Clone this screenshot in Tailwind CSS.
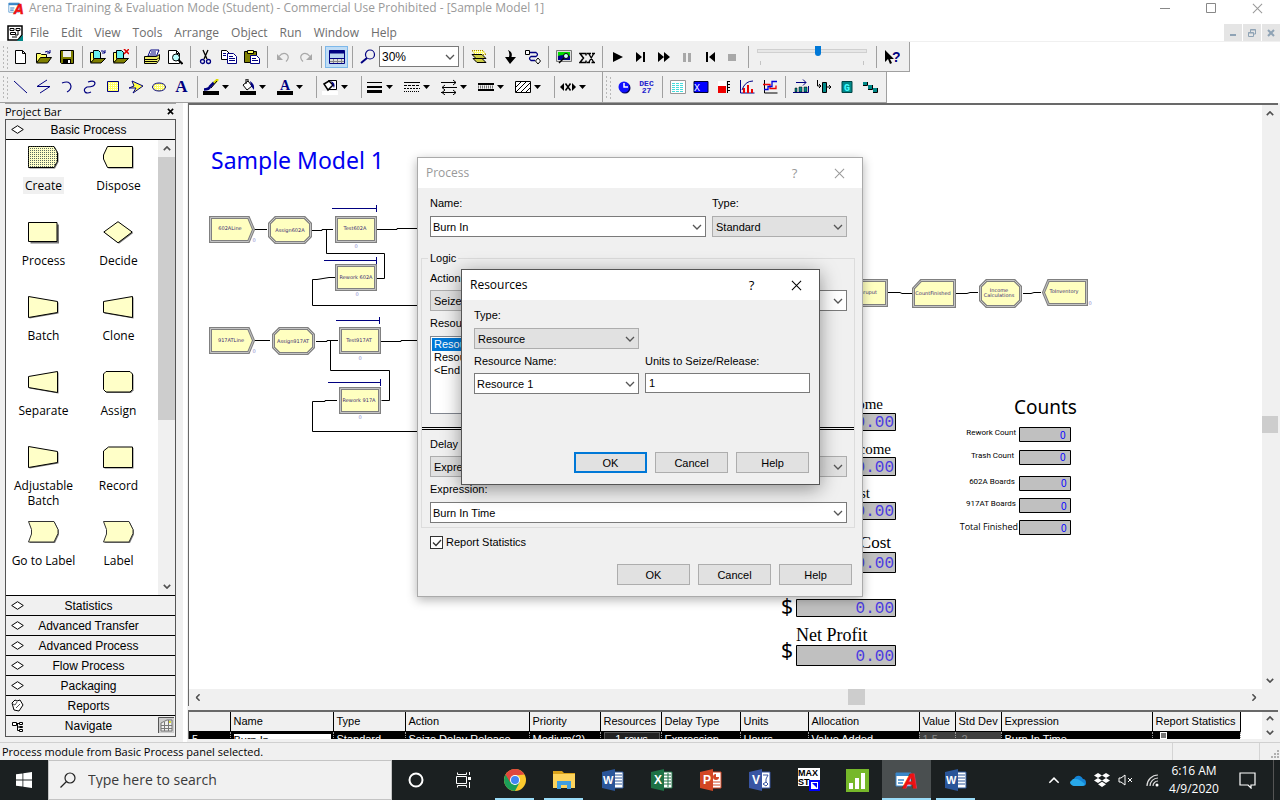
<!DOCTYPE html>
<html lang="en">
<head>
    <meta charset="UTF-8">
    <meta name="viewport" content="width=device-width, initial-scale=1.0">
    <title>Arena Training & Evaluation Mode (Student) - [Sample Model 1]</title>
    <script src="https://cdn.jsdelivr.net/npm/@tailwindcss/browser@4"></script>
</head>
<body class="h-screen overflow-hidden flex flex-col bg-white text-black font-['Open_Sans',sans-serif] text-[12px] leading-4">

    <!-- shared shapes -->
    <svg class="absolute size-0">
        <symbol id="chev" viewBox="0 0 10 6"><path d="M1 1l4 4 4-4" fill="none" stroke="currentColor" stroke-width="1.3"/></symbol>
        <symbol id="arr" viewBox="0 0 10 6"><path d="M1 1l4 4 4-4" fill="none" stroke="#505050" stroke-width="2"/></symbol>
        <symbol id="caret" viewBox="0 0 7 4"><path d="M0 0h7L3.500 4z"/></symbol>
        <symbol id="dia" viewBox="0 0 13 9"><path d="M.7 4.500L6.500 .7l5.800 3.800-5.800 3.800z" fill="#fff" stroke="#000"/></symbol>
        <symbol id="x" viewBox="0 0 12 12"><path d="M1 1l10 10M11 1L1 11" fill="none" stroke="currentColor" stroke-width="1.1"/></symbol>
        <symbol id="arena" viewBox="0 0 24 20">
            <path d="M1 3h15v13H1z" fill="#fff" stroke="#3a86c8"/><path d="M1 3h15v3H1z" fill="#3a86c8"/>
            <path d="M3 10h6M3 13h5" stroke="#3a86c8" stroke-width="1.500"/>
            <text x="8" y="18" font-family="Liberation Sans" font-size="20" font-weight="bold" font-style="italic" fill="#e11" stroke="#e11" stroke-width=".8">A</text>
        </symbol>
        <symbol id="word" viewBox="0 0 22 22">
            <path d="M11 3h10v16H11z" fill="#fff" stroke="#2a5599"/><path d="M13 6h7M13 9h7M13 12h7M13 15h7" stroke="#2a5599"/>
            <path d="M0 3L13 0v22L0 19z" fill="#2a5599"/>
            <text x="1" y="15" font-family="Liberation Sans" font-size="11" font-weight="bold" fill="#fff">W</text>
        </symbol>
        <symbol id="s-create" viewBox="0 0 31 23"><path d="M.5 .5H26l3.500 6v8.500l-3.500 6.500H.5z"/></symbol>
        <symbol id="s-dispose" viewBox="0 0 31 23"><path d="M4.500 .5h25v21h-25L.5 13V9z"/></symbol>
        <symbol id="s-process" viewBox="0 0 31 23"><path d="M.5 1.500h28.500v19H.5z"/></symbol>
        <symbol id="s-decide" viewBox="0 0 31 23"><path d="M15 .7l14.200 10.300L15 21.800 .8 11z"/></symbol>
        <symbol id="s-batch" viewBox="0 0 31 23"><path d="M.5 .5l29 5v11l-29 5z"/></symbol>
        <symbol id="s-clone" viewBox="0 0 31 23"><path d="M29.500 .5L.5 5.500v11l29 5z"/></symbol>
        <symbol id="s-assign" viewBox="0 0 31 23"><path d="M3 .5h24l2.500 2.500v15.500l-2.500 2.500H3L.5 18.500V3z"/></symbol>
        <symbol id="s-record" viewBox="0 0 31 23"><path d="M5.500 1h24v20.500H.5V5z"/></symbol>
        <symbol id="s-label" viewBox="0 0 31 23"><path d="M.5 .5H26l4 8v4l-4 8.500H.5l3-8V8.500z"/></symbol>
        <pattern id="dots" width="2" height="2" patternUnits="userSpaceOnUse"><path d="M0 0h1v1H0z" fill="#5a6a60"/></pattern>
        <pattern id="yel" width="2" height="2" patternUnits="userSpaceOnUse"><path d="M0 0h2v2H0z" fill="#ff6"/><path d="M0 0h1v1H0z" fill="#fff"/></pattern>
    </svg>

    <!-- title bar -->
    <header class="h-4 shrink-0 flex items-center pl-2 text-[#999]">
        <svg class="w-[17px] h-[14px] mr-1"><use href="#arena"/></svg>
        <h1 class="grow">Arena Training &amp; Evaluation Mode (Student) - Commercial Use Prohibited - [Sample Model 1]</h1>
        <button class="w-[46px] flex justify-center" aria-label="Minimize"><svg class="w-[10px] h-[10px]"><path d="M0 5.500h10" stroke="#888"/></svg></button>
        <button class="w-[46px] flex justify-center" aria-label="Maximize"><svg class="w-[10px] h-[10px]"><path d="M.5 .5h9v9h-9z" fill="none" stroke="#888"/></svg></button>
        <button class="w-[46px] flex justify-center" aria-label="Close"><svg class="w-[11px] h-[11px]"><use href="#x"/></svg></button>
    </header>

    <!-- menu -->
    <nav class="h-[26px] shrink-0 flex items-center pt-2 pl-[7px] text-[#6d6d6d] border-b border-[#f0f0f0]">
        <svg class="w-4 h-4 mr-[7px]" viewBox="0 0 16 16"><path d="M1 1h14v9l-4 5H1z" fill="#fff" stroke="#000" stroke-width="1.500"/><path d="M3 3.500h4v2H3zM9 3.500h4v2H9zM3.500 7.500h5v2h-5z" fill="none" stroke="#000"/><path d="M5 12h5M11 6v4H8" fill="none" stroke="#000"/><path d="M10 16l6-6v6z" fill="#088"/></svg>
        <div class="grow flex gap-3">
            <a href="#">File</a><a href="#">Edit</a><a href="#">View</a><a href="#">Tools</a><a href="#">Arrange</a><a href="#">Object</a><a href="#">Run</a><a href="#">Window</a><a href="#">Help</a>
        </div>
        <div class="flex gap-px">
            <button class="w-[18px] h-[17px] bg-[#e5e5e5] flex justify-center items-center" aria-label="Minimize document"><svg class="w-2 h-2"><path d="M1 6h6" stroke="#8fa3b5" stroke-width="2"/></svg></button>
            <button class="w-[18px] h-[17px] bg-[#e5e5e5] flex justify-center items-center" aria-label="Restore document"><svg class="w-2 h-2" viewBox="0 0 8 8"><path d="M.5 3.500h5v4h-5zM2.500 3V.5h5v4.500H6M.5 4h5M2.500 1h5" fill="none" stroke="#8fa3b5"/></svg></button>
            <button class="w-[18px] h-[17px] bg-[#e5e5e5] flex justify-center items-center" aria-label="Close document"><svg class="w-2 h-2" viewBox="0 0 8 8"><path d="M1 1l6 6M7 1L1 7" stroke="#8fa3b5" stroke-width="2"/></svg></button>
        </div>
    </nav>

    <!-- standard toolbar -->
    <div class="h-[30px] shrink-0 flex">
        <div class="flex items-center bg-[#f0f0f0] border-b border-r border-[#a0a0a0] pr-[6px] [&_button]:w-[23px] [&_button]:h-[22px] [&_button]:flex [&_button]:items-center [&_button]:justify-center [&_button>svg]:size-4 [&>i]:w-2 [&>i]:h-[22px] [&>i]:flex [&>i]:justify-center [&>i]:before:w-px [&>i]:before:bg-[#a0a0a0]">
            <svg class="w-[9px] h-[26px]"><path d="M3.500 2v22M7.500 3v22" stroke="#b8b8b8" stroke-dasharray="2 2"/></svg>
            <button aria-label="New"><svg viewBox="0 0 16 16"><path d="M2.500 1.500h7l3 3v10h-10zM9.500 1.500v3h3" fill="#fff" stroke="#000"/></svg></button>
            <button aria-label="Open"><svg viewBox="0 0 16 16"><path d="M.5 13.500v-9h4l1 1h5v3" fill="#ff6" stroke="#000"/><path d="M.5 14l4-5.500h11l-4 5.500z" fill="#808000" stroke="#000"/><path d="M9 3q3-2 5 1m0-3v3h-3" fill="none" stroke="#000080"/></svg></button>
            <button aria-label="Save"><svg viewBox="0 0 16 16"><path d="M1.500 1.500h13v13h-12l-1-1z" fill="#808000" stroke="#000"/><path d="M4 2h8v6H4z" fill="#f0f0f0"/><path d="M4 10h8v5H4z"/><path d="M9 11h2v3H9z" fill="#fff"/></svg></button>
            <i></i>
            <button aria-label="Attach panel"><svg viewBox="0 0 16 16"><path d="M.5 13V3.500h3l1 1h3v8z" fill="#ff6" stroke="#000"/><path d="M3.500 1.500h5l2 2v6h-7z" fill="#6ee" stroke="#000"/><path d="M.5 14l4-4.500h11L11 14z" fill="#808000" stroke="#000"/><path d="M11 2q3-1 4 2m0-3v3h-3" fill="none" stroke="#000080"/></svg></button>
            <button aria-label="Detach panel"><svg viewBox="0 0 16 16"><path d="M.5 13V3.500h3l1 1h3v8z" fill="#ff6" stroke="#000"/><path d="M3.500 1.500h5l2 2v6h-7z" fill="#6ee" stroke="#000"/><path d="M.5 14l4-4.500h11L11 14z" fill="#808000" stroke="#000"/><path d="M11 0l5 5M16 0l-5 5" stroke="#d00" stroke-width="1.500"/></svg></button>
            <i></i>
            <button aria-label="Print"><svg viewBox="0 0 16 16"><path d="M4 7l2.500-6H15l-2.500 6z" fill="#fff" stroke="#000080"/><path d="M7 3h5M6 5h6" stroke="#000080"/><path d="M.5 7.500h12l3-2v5l-3 4H.5z" fill="#ee6" stroke="#000"/><path d="M1 10.500h12l2-2M1 12.500h12" fill="none" stroke="#000"/></svg></button>
            <button aria-label="Print Preview"><svg viewBox="0 0 16 16"><path d="M1.500 1.500h8l3 3v10h-11zM9.500 1.500v3h3" fill="#fff" stroke="#000"/><circle cx="9" cy="8.500" r="3.500" fill="#bff" stroke="#000"/><path d="M11.500 11l4 4" stroke="#000" stroke-width="2"/></svg></button>
            <i></i>
            <button aria-label="Cut"><svg viewBox="0 0 16 16"><path d="M5 1l4 9M10 1L6 10" stroke="#000" stroke-width="1.300"/><circle cx="4.500" cy="12.500" r="2" fill="none" stroke="#000080" stroke-width="1.300"/><circle cx="10.500" cy="12.500" r="2" fill="none" stroke="#000080" stroke-width="1.300"/></svg></button>
            <button aria-label="Copy"><svg viewBox="0 0 16 16"><path d="M.5 1.500h5l3 3v6h-8z" fill="#fff" stroke="#000"/><path d="M6.500 4.500h6l3 3v7h-9z" fill="#fff" stroke="#000080"/><path d="M2 4.500h3M2 6.500h3M8 7.500h4M8 9.500h6M8 11.500h6" stroke="#000080"/></svg></button>
            <button aria-label="Paste"><svg viewBox="0 0 16 16"><path d="M.5 2.500h12v11H.5z" fill="#808000" stroke="#000"/><path d="M3.500 1.500h6v3h-6z" fill="#ff6" stroke="#000"/><path d="M6.500 6.500h6l3 3v5h-9z" fill="#fff" stroke="#000080"/><path d="M8 9.500h4M8 11.500h6" stroke="#000080"/></svg></button>
            <i></i>
            <button aria-label="Undo"><svg viewBox="0 0 16 16"><path d="M4 7.500q4-5 8-2 3 3-1 7" fill="none" stroke="#a8a8a8" stroke-width="1.200"/><path d="M2 5v6h6z" fill="#a8a8a8"/></svg></button>
            <button aria-label="Redo"><svg viewBox="0 0 16 16"><path d="M12 7.500Q8 2.500 4 5.500q-3 3 1 7" fill="none" stroke="#a8a8a8" stroke-width="1.200"/><path d="M14 5v6H8z" fill="#a8a8a8"/></svg></button>
            <i></i>
            <button class="bg-[#bfdcf5] border border-[#7db8ea]" aria-label="Split Screen"><svg viewBox="0 0 16 16"><path d="M.5 1.500h15v13H.5z" fill="#b9d3f0" stroke="#000080"/><path d="M.5 1.500h15v3H.5z" fill="#000080"/><path d="M1 10h14v4H1z" fill="#ddd"/><path d="M1 12.500h14M4.500 10v4M8.500 10v4M12.500 10v4" stroke="#888"/><path d="M1 9.500h14" stroke="#000080"/></svg></button>
            <i></i>
            <button aria-label="Zoom"><svg viewBox="0 0 16 16"><circle cx="10" cy="5.500" r="4.500" fill="none" stroke="#000080" stroke-width="1.200"/><path d="M7 9l-6 5" stroke="#000080" stroke-width="2"/></svg></button>
            <div class="w-20 relative">
                <select aria-label="Zoom level" class="appearance-none block w-full h-[21px] bg-white border border-[#7a7a7a] pl-[2px] text-[12px] font-['Liberation_Sans',sans-serif]"><option>30%</option></select>
                <svg class="absolute right-1 top-2 w-[10px] h-[6px] pointer-events-none text-[#555]"><use href="#chev"/></svg>
            </div>
            <i></i>
            <button aria-label="Layers"><svg viewBox="0 0 16 16"><path d="M1 1.500h11l3 4H4z" fill="url(#yel)" stroke="#a80" stroke-dasharray="1 1"/><path d="M1 5.500h10l4 4H5z" fill="#cc4" stroke="#000"/><path d="M2 9.500h9l4 4H6z" fill="#cc4" stroke="#000"/></svg></button>
            <i></i>
            <button aria-label="Submodel"><svg viewBox="0 0 16 16"><path d="M6 1q5 2 3.500 7H14l-6 7-5-7h4Q8 4 6 1z"/></svg></button>
            <button aria-label="Connect"><svg viewBox="0 0 16 16"><path d="M.5 1.500h4v4h-4z" fill="#fff" stroke="#000"/><path d="M5 3.500h6q3 2 0 4H6q-3 2 0 4h4" fill="none" stroke="#000080" stroke-width="1.300"/><path d="M13 9l2.500 3-2.500 3-2.500-3z" fill="#fff" stroke="#000"/></svg></button>
            <i></i>
            <button aria-label="View Manager"><svg viewBox="0 0 16 16"><path d="M.5 1.500h15v11H.5z" fill="#ddd" stroke="#777"/><path d="M2 3h12v4H2z" fill="#0d0"/><path d="M2 7q6-2 12 0v4H2z" fill="#008"/><circle cx="10" cy="7" r="2.500" fill="#cff" stroke="#000"/><path d="M8 9l-5 5" stroke="#000" stroke-width="1.500"/></svg></button>
            <button aria-label="Expression Builder"><svg viewBox="0 0 16 16"><path d="M7 6.500V4.500H1L4.500 9 1 13.500h6v-2" fill="none" stroke="#000" stroke-width="1.500"/><path d="M10 5l4.500 8M14.500 5L10 13M8 4.500h4M13 4.500h3M8 13.500h3M12.500 13.500H16" stroke="#000" fill="none" stroke-width="1.300"/></svg></button>
            <i></i>
            <button aria-label="Go"><svg viewBox="0 0 16 16"><path d="M3 3l10 5-10 5z"/></svg></button>
            <button aria-label="Step"><svg viewBox="0 0 16 16"><path d="M3 3l6 5-6 5zM10 3h2v10h-2z"/></svg></button>
            <button aria-label="Fast-Forward"><svg viewBox="0 0 16 16"><path d="M2 3l6 5-6 5zM8 3l6 5-6 5z"/></svg></button>
            <button aria-label="Pause"><svg viewBox="0 0 16 16"><path d="M4 4h3v9H4zM9 4h3v9H9z" fill="#a8a8a8"/></svg></button>
            <button aria-label="Start Over"><svg viewBox="0 0 16 16"><path d="M13 3L7 8l6 5zM4 3h2v10H4z"/></svg></button>
            <button aria-label="End"><svg viewBox="0 0 16 16"><path d="M3 5h8v7H3z" fill="#a8a8a8"/></svg></button>
            <i></i>
            <div class="w-[120px] relative px-[5px]">
                <input type="range" value="56" aria-label="Animation speed" class="appearance-none block w-full h-1 mb-2 bg-[#e7e7e7] border border-[#d0d0d0] [&::-webkit-slider-thumb]:appearance-none [&::-webkit-slider-thumb]:w-[6px] [&::-webkit-slider-thumb]:h-[10px] [&::-webkit-slider-thumb]:bg-[#0078d7] [&::-webkit-slider-thumb]:rounded-b-sm">
                <div class="mx-[3px] h-1 border-x border-[#c4c4c4]"></div>
            </div>
            <i></i>
            <button aria-label="Context Help"><svg viewBox="0 0 16 16"><path d="M1 1v12l3-3 2 5 2-1-2-4h4z"/><text x="8" y="13" font-family="Liberation Sans" font-size="14" font-weight="bold" fill="#000080">?</text></svg></button>
        </div>
    </div>

    <!-- draw, animate and integration toolbars -->
    <div class="h-[31px] shrink-0 flex [&>div]:flex [&>div]:items-center [&>div]:bg-[#f0f0f0] [&>div]:border-b [&>div]:border-r [&>div]:border-[#a0a0a0] [&_button]:w-[23px] [&_button]:h-[22px] [&_button]:flex [&_button]:items-center [&_button]:justify-center [&_button>svg]:size-4 [&_i]:w-2 [&_i]:h-[22px] [&_i]:flex [&_i]:justify-center [&_i]:before:w-px [&_i]:before:bg-[#a0a0a0] [&_button.drop]:w-[37px] [&_button.drop]:justify-start [&_button.drop]:pl-[2px] [&_button.drop]:gap-[3px] [&_button.drop>svg+svg]:w-[7px] [&_button.drop>svg+svg]:h-1">
        <div class="pr-[7px]">
            <svg class="w-[9px] h-[26px]"><path d="M3.500 2v22M7.500 3v22" stroke="#b8b8b8" stroke-dasharray="2 2"/></svg>
            <button aria-label="Line"><svg viewBox="0 0 16 16"><path d="M1 2l13 12" stroke="#000080"/></svg></button>
            <button aria-label="Polyline"><svg viewBox="0 0 16 16"><path d="M11 1L1 7.500h13L4 14" fill="none" stroke="#000080"/></svg></button>
            <button aria-label="Arc"><svg viewBox="0 0 16 16"><path d="M3 4q8-3 9 3 0 4-4 6" fill="none" stroke="#000080" stroke-width="1.200"/></svg></button>
            <button aria-label="Bezier Curve"><svg viewBox="0 0 16 16"><path d="M6 3q6-2 7 1 0 4-8 4-4 2-2 5 2 2 6 0" fill="none" stroke="#000080" stroke-width="1.200"/></svg></button>
            <button aria-label="Box"><svg viewBox="0 0 16 16"><path d="M2.500 2.500h11v10h-11z" fill="url(#yel)" stroke="#000080"/></svg></button>
            <button aria-label="Polygon"><svg viewBox="0 0 16 16"><path d="M4 2l11 5-10 7 3-5H1l5-2z" fill="#ff4" stroke="#000080"/></svg></button>
            <button aria-label="Ellipse"><svg viewBox="0 0 16 16"><ellipse cx="8" cy="8" rx="6.500" ry="4" fill="url(#yel)" stroke="#000080"/></svg></button>
            <button aria-label="Text" class="font-['Liberation_Serif',serif] font-bold text-[17px] text-[#000080]">A</button>
            <i></i>
            <button class="drop" aria-label="Line Color"><svg viewBox="0 0 16 16"><path d="M0 12h16v4H0z"/><path d="M1 10.500q5 0 6-3l4-4" fill="none" stroke="#000080" stroke-width="2.500"/><path d="M11 4l4-4" stroke="#dd0" stroke-width="2.500"/><path d="M8 9l6-7" stroke="#000"/></svg><svg><use href="#caret"/></svg></button>
            <button class="drop" aria-label="Fill Color"><svg viewBox="0 0 16 16"><path d="M0 12h16v4H0z"/><path d="M3 6l5-4 4 5-5 4z" fill="#fff" stroke="#000"/><path d="M10 2q5 3 4 9l-3-4z" fill="#000080"/><path d="M6 5V0h2v3" fill="none" stroke="#000"/></svg><svg><use href="#caret"/></svg></button>
            <button class="drop" aria-label="Text Color"><svg viewBox="0 0 16 16"><path d="M0 12h16v4H0z"/><text x="3" y="11" font-family="Liberation Serif" font-size="14" font-weight="bold" fill="#000080">A</text></svg><svg><use href="#caret"/></svg></button>
            <i></i>
            <button class="drop" aria-label="Window Background Color"><svg viewBox="0 0 16 16"><path d="M0 12h16v4H0z" fill="#fff"/><path d="M6.500 1.500h8v9h-8z" fill="#fff" stroke="#000"/><path d="M2 5l5-3 4 4-5 5z" fill="#fff" stroke="#000" stroke-width="1.500"/><path d="M9 2q5 2 3 7z" fill="#000080"/></svg><svg><use href="#caret"/></svg></button>
            <i></i>
            <button class="drop" aria-label="Line Width"><svg viewBox="0 0 16 16"><path d="M0 3.500h15" stroke="#000"/><path d="M0 8h15" stroke="#000" stroke-width="2"/><path d="M0 12.500h15" stroke="#000" stroke-width="3"/></svg><svg><use href="#caret"/></svg></button>
            <button class="drop" aria-label="Line Style"><svg viewBox="0 0 16 16"><path d="M0 3.500h16" stroke="#000"/><path d="M0 6.500h16" stroke="#000" stroke-dasharray="3 1"/><path d="M0 9.500h16" stroke="#000" stroke-dasharray="2 1"/><path d="M0 12.500h16" stroke="#000" stroke-dasharray="1 1"/></svg><svg><use href="#caret"/></svg></button>
            <button class="drop" aria-label="Arrow Style"><svg viewBox="0 0 16 16"><path d="M0 3.500h15M12 1l3 2.500L12 6M1 8.500h15M4 6L1 8.500 4 11M0 13.500h15M4 11l-3 2.500L4 16M12 11l3 2.500-3 2.500" fill="none" stroke="#000"/></svg><svg><use href="#caret"/></svg></button>
            <button class="drop" aria-label="Line Pattern"><svg viewBox="0 0 16 16"><path d="M0 5h16M0 11h16" stroke="#000" stroke-width="2"/><path d="M0 8h16" stroke="#777" stroke-width="3" stroke-dasharray="1 1"/></svg><svg><use href="#caret"/></svg></button>
            <button class="drop" aria-label="Fill Pattern"><svg viewBox="0 0 16 16"><path d="M.5 2.500h15v11H.5z" fill="#fff" stroke="#000"/><path d="M1 8l5-5M1 13L11 3M6 13l9-9M11 13l4-4" stroke="#000"/></svg><svg><use href="#caret"/></svg></button>
            <i></i>
            <button class="drop" aria-label="Text Effect"><svg viewBox="0 0 16 16"><path d="M4 4v8L0 8zM12 4v8l4-4z"/><path d="M5.500 4.500l5 7M10.500 4.500l-5 7" stroke="#000" stroke-width="1.500"/></svg><svg><use href="#caret"/></svg></button>
        </div>
        <div class="pr-[5px]">
            <svg class="w-[9px] h-[26px]"><path d="M3.500 2v22M7.500 3v22" stroke="#b8b8b8" stroke-dasharray="2 2"/></svg>
            <button aria-label="Clock"><svg viewBox="0 0 16 16"><circle cx="9" cy="9" r="5.500" fill="#000050"/><circle cx="8" cy="8" r="5.500" fill="#11f"/><path d="M8 4v4h4" fill="none" stroke="#fff" stroke-width="1.500"/></svg></button>
            <button aria-label="Date" class="flex-col font-['Liberation_Mono',monospace] font-bold text-[8px] leading-[7px] text-[#22c]"><span>DEC</span><span>27</span></button>
            <i></i>
            <button aria-label="Variable"><svg viewBox="0 0 16 16"><path d="M.5 1.500h15v13H.5z" fill="#fff" stroke="#999"/><path d="M2 4.500h12M2 6.500h12M2 8.500h12M2 10.500h12M2 12.500h12" stroke="#4dd" stroke-dasharray="3 1"/></svg></button>
            <button aria-label="Level"><svg viewBox="0 0 16 16"><path d="M1 2.500h14v11H1z" fill="#00f" stroke="#003"/><text x="1" y="12" font-family="Liberation Mono" font-size="10" fill="#fff">X</text></svg></button>
            <button aria-label="Histogram"><svg viewBox="0 0 16 16"><path d="M2 2h8v5H2z" fill="#fff"/><path d="M2 7h8v7H2z" fill="#e00"/><path d="M11.500 2v12M12 2.500h2M12 5.500h2M12 8.500h2M12 11.500h2" stroke="#000"/></svg></button>
            <button aria-label="Plot"><svg viewBox="0 0 16 16"><path d="M1.500 1v13h14M3 11Q6 2 14 2" fill="none" stroke="#008"/><path d="M4 9h2v5H4zM8 6h2v8H8zM12 10h2v4h-2z" fill="#e00"/></svg></button>
            <button aria-label="Level Plot"><svg viewBox="0 0 16 16"><path d="M2.500 1v13h13" fill="none" stroke="#000"/><path d="M1 5.500h7v4h6v-3" fill="none" stroke="#e00" stroke-width="1.300"/><path d="M2 10.500h4v-3h4v-5h5" fill="none" stroke="#00d" stroke-width="1.300"/></svg></button>
            <i></i>
            <button aria-label="Storage"><svg viewBox="0 0 16 16"><path d="M3 3.500h10M10 .5l3 3-3 3" fill="none" stroke="#000080"/><path d="M0 13.500h15.500V7" fill="none" stroke="#000080"/><path d="M2 9h2v4H2zM6 8h3v5H6zM11 8h3v5h-3z" fill="#088" stroke="#000" stroke-width=".5"/></svg></button>
            <button aria-label="Seize"><svg viewBox="0 0 16 16"><path d="M1.500 1v6H5M3 5l2 2-2 2M11 8h4M13 6l2 2-2 2" fill="none" stroke="#000"/><path d="M6.500 3.500h4v10h-4z" fill="#088" stroke="#000"/></svg></button>
            <button aria-label="Global"><svg viewBox="0 0 16 16"><path d="M3 2.500h10v11H3z" fill="#088" stroke="#044"/><text x="5" y="12" font-family="Liberation Mono" font-size="10" font-weight="bold" fill="#4ff">G</text></svg></button>
            <button aria-label="Network"><svg viewBox="0 0 16 16"><path d="M1 3h4v3H1zM6 6h4v4H6zM11 9h4v4h-4z" fill="#088"/><path d="M1 6.500h4.500V3M6 10.500h4.500V6M11 13.500h4.500V9" fill="none" stroke="#000"/></svg></button>
        </div>
    </div>

    <main class="grow min-h-0 flex bg-[#f0f0f0]">
        <!-- project bar -->
        <aside class="w-[181px] shrink-0 flex flex-col pl-[5px] pr-[5px] pb-[5px]">
            <div class="h-4 shrink-0 flex items-center border-t border-[#a0a0a0] text-[11px]">
                <h2 class="grow">Project Bar</h2>
                <button class="pr-[2px]" aria-label="Close Project Bar"><svg class="w-[7px] h-[7px]" viewBox="0 0 8 8"><path d="M1 1l6 6M7 1L1 7" stroke="#000" stroke-width="1.800"/></svg></button>
            </div>
            <div class="grow min-h-0 flex flex-col border border-[#555] font-['Liberation_Sans',sans-serif] [&>button]:h-5 [&>button]:shrink-0 [&>button]:flex [&>button]:items-center [&>button]:pl-[5px] [&>button]:border-b [&>button]:border-black [&>button>span]:grow [&>button>span]:pr-[22px] [&>button>svg]:w-[13px]">
                <button><svg class="h-[9px]"><use href="#dia"/></svg><span>Basic Process</span></button>
                <div class="grow min-h-0 flex bg-white border-b border-black">
                    <ul class="grow grid grid-cols-2 auto-rows-[75px] content-start overflow-hidden text-center font-['Open_Sans',sans-serif] leading-[15px] pt-[6px] pr-[2px] [&_svg]:w-[32px] [&_svg]:h-[24px] [&_svg]:mx-auto [&_svg]:mb-2">
                        <li><svg><use href="#s-create" x="1" y="1" width="31" height="23" fill="#777"/><use href="#s-create" width="31" height="23" fill="#ffffc8" stroke="#000"/><use href="#s-create" width="31" height="23" fill="url(#dots)"/></svg><span class="bg-[#f0f0f0] px-[2px]">Create</span></li>
                        <li><svg><use href="#s-dispose" x="1" y="1" width="31" height="23" fill="#777"/><use href="#s-dispose" width="31" height="23" fill="#ffffc8" stroke="#000"/></svg>Dispose</li>
                        <li><svg><use href="#s-process" x="2" y="2" width="31" height="23" fill="#777"/><use href="#s-process" width="31" height="23" fill="#ffffc8" stroke="#000"/></svg>Process</li>
                        <li><svg><use href="#s-decide" x="1" y="1" width="31" height="23" fill="#777"/><use href="#s-decide" width="31" height="23" fill="#ffffc8" stroke="#000"/></svg>Decide</li>
                        <li><svg><use href="#s-batch" x="1" y="1" width="31" height="23" fill="#777"/><use href="#s-batch" width="31" height="23" fill="#ffffc8" stroke="#000"/></svg>Batch</li>
                        <li><svg><use href="#s-clone" x="1" y="1" width="31" height="23" fill="#777"/><use href="#s-clone" width="31" height="23" fill="#ffffc8" stroke="#000"/></svg>Clone</li>
                        <li><svg><use href="#s-clone" x="1" y="1" width="31" height="23" fill="#777"/><use href="#s-clone" width="31" height="23" fill="#ffffc8" stroke="#000"/></svg>Separate</li>
                        <li><svg><use href="#s-assign" x="1" y="1" width="31" height="23" fill="#777"/><use href="#s-assign" width="31" height="23" fill="#ffffc8" stroke="#000"/></svg>Assign</li>
                        <li><svg><use href="#s-batch" x="1" y="1" width="31" height="23" fill="#777"/><use href="#s-batch" width="31" height="23" fill="#ffffc8" stroke="#000"/></svg>Adjustable<br>Batch</li>
                        <li><svg><use href="#s-record" x="1" y="1" width="31" height="23" fill="#777"/><use href="#s-record" width="31" height="23" fill="#ffffc8" stroke="#000"/></svg>Record</li>
                        <li class="whitespace-nowrap"><svg><use href="#s-label" x="1" y="1" width="31" height="23" fill="#777"/><use href="#s-label" width="31" height="23" fill="#ffffc8" stroke="#333"/></svg>Go to Label</li>
                        <li><svg><use href="#s-label" x="1" y="1" width="31" height="23" fill="#777"/><use href="#s-label" width="31" height="23" fill="#ffffc8" stroke="#333"/></svg>Label</li>
                    </ul>
                    <div class="w-[17px] shrink-0 flex flex-col bg-[#f0f0f0]">
                        <button class="h-[17px] flex items-center justify-center" aria-label="Scroll up"><svg class="w-2 h-[5px] rotate-180"><use href="#arr"/></svg></button>
                        <div class="bg-[#cdcdcd] flex-[262]"></div>
                        <div class="flex-[158]"></div>
                        <button class="h-[17px] flex items-center justify-center" aria-label="Scroll down"><svg class="w-2 h-[5px]"><use href="#arr"/></svg></button>
                    </div>
                </div>
                <button><svg class="h-[9px]"><use href="#dia"/></svg><span>Statistics</span></button>
                <button><svg class="h-[9px]"><use href="#dia"/></svg><span>Advanced Transfer</span></button>
                <button><svg class="h-[9px]"><use href="#dia"/></svg><span>Advanced Process</span></button>
                <button><svg class="h-[9px]"><use href="#dia"/></svg><span>Flow Process</span></button>
                <button><svg class="h-[9px]"><use href="#dia"/></svg><span>Packaging</span></button>
                <button><svg class="h-[13px]" viewBox="0 0 13 13"><path d="M1 4l3-3 2 1 3-1 3 5-4 6-5-1z" fill="#fff" stroke="#000"/><path d="M2 5l2 1 2-3M5 9l4-4" fill="none" stroke="#555"/></svg><span>Reports</span></button>
                <button class="relative border-b-0!"><svg class="h-[11px]" viewBox="0 0 13 11"><path d="M1.500 1.500h4v3h-4zM8.500 1.500h3v2h-3zM8.500 5.500h3v1h-3zM8.500 8.500h3v2h-3zM6 2.500h2M6.500 3v6.500H8M6.500 6H8" fill="#fff" stroke="#000"/></svg><span>Navigate</span>
                    <svg class="absolute right-px top-px h-4 w-4!" viewBox="0 0 16 16"><path d="M0 0h16v16H0z" fill="#ccc"/><path d="M.5 16V.5H16" fill="none" stroke="#555"/><path d="M3 6l6-3h5v11H3z" fill="#eee" stroke="#777"/><path d="M3 8.500h11M3 11.500h11M6.500 5v9M10.500 3v11" stroke="#777"/><path d="M11 4h2v2h-2z" fill="#dd3"/></svg></button>
            </div>
        </aside>
        <div class="w-[7px] shrink-0 bg-[#f0f0f0] flex justify-center"><div class="w-1 bg-white"></div></div>

        <div class="grow min-w-0 flex flex-col gap-1 pb-[3px] pr-[2px]">
            <!-- model window -->
            <section class="grow min-h-0 flex flex-col border-t-2 border-l border-[#696969] bg-[#f0f0f0] pb-px">
                <div class="grow min-h-0 flex">
                    <div class="grow min-w-0 bg-white overflow-hidden">
                        <svg class="block w-full h-full"><g transform="translate(-189 -105)">
                            <text x="211" y="169" font-family="Noto Sans" font-size="23" fill="#0000f0">Sample Model 1</text>
                            <!-- connectors -->
                            <g fill="none" stroke="#000">
                                <path d="M255 229.500h12M312 230.500h10v-1h11M326.500 230v23.500h58v25h-8M335 277.500h-6l-12 2h-4.500v26H420M377 229.500h20v-1h25"/>
                                <path d="M255 340.500h15M316 341.500h11v-1h11M330.500 341v29.500h59v30h-8M337 400.500h-12v1h-12.500v30H420M381 341.500h20v-1h21"/>
                                <path d="M888 292.500h12l2 1h10M956 293.500h11l3-1h8M1023 293.500h8l3-1h7"/>
                            </g>
                            <!-- queues -->
                            <path d="M332 208.500h44.500m0-3.500v7M324 260.500h52.500m0-3.500v7M336 320.500h43.500m0-3.500v7M328 382.500h52.500m0-3.500v7" fill="none" stroke="#000080"/>
                            <!-- modules -->
                            <g fill="#ffffc0" stroke="#808080" stroke-width="3">
                                <path d="M210.500 217.500h38l5 12-5 12h-38z"/><path d="M210.500 328.500h38l5 12-5 12h-38z"/>
                                <path d="M275.500 217.500h29l6 6v13l-6 6h-29l-6-6v-13z"/><path d="M279.500 328.500h28l6 6v13l-6 6h-28l-6-6v-13z"/>
                                <path d="M336.500 217.500h39v24h-39zM336.500 265.500h39v24h-39zM340.500 328.500h39v24h-39zM340.500 388.500h39v24h-39z"/>
                                <path d="M850 280.500h36.500v25H850z"/><path d="M921 280.500h33.500v26h-41v-18z"/>
                                <path d="M986.500 280.500h28l6 6v14l-6 6h-28l-6-6v-14z"/><path d="M1048.500 280.500h38v24h-38l-5-12z"/>
                            </g>
                            <g fill="none" stroke="#c4c4c4">
                                <path d="M210.500 217.500h38l5 12-5 12h-38z"/><path d="M210.500 328.500h38l5 12-5 12h-38z"/>
                                <path d="M275.500 217.500h29l6 6v13l-6 6h-29l-6-6v-13z"/><path d="M279.500 328.500h28l6 6v13l-6 6h-28l-6-6v-13z"/>
                                <path d="M336.500 217.500h39v24h-39zM336.500 265.500h39v24h-39zM340.500 328.500h39v24h-39zM340.500 388.500h39v24h-39z"/>
                                <path d="M850 280.500h36.500v25H850z"/><path d="M921 280.500h33.500v26h-41v-18z"/>
                                <path d="M986.500 280.500h28l6 6v14l-6 6h-28l-6-6v-14z"/><path d="M1048.500 280.500h38v24h-38l-5-12z"/>
                            </g>
                            <g font-family="DejaVu Sans" font-size="5" fill="#3a2a70" text-anchor="middle">
                                <text x="230" y="230">602ALine</text><text x="290" y="232">Assign602A</text><text x="355" y="230">Test602A</text><text x="356" y="279">Rework 602A</text>
                                <text x="231" y="342">917ATLine</text><text x="293" y="343">Assign917AT</text><text x="359" y="342">Test917AT</text><text x="359" y="402">Rework 917A</text>
                                <text x="867" y="294">Thruput</text><text x="933" y="295">CountFinished</text><text x="999" y="292">Income</text><text x="999" y="297">Calculations</text><text x="1064" y="293">ToInventory</text>
                                <g fill="#88c"><text x="254" y="242">0</text><text x="254" y="353">0</text><text x="356" y="248">0</text><text x="357" y="296">0</text><text x="360" y="360">0</text><text x="360" y="419">0</text><text x="1090" y="305">0</text></g>
                            </g>
                            <!-- money variables -->
                            <g fill="#c0c0c0" stroke="#000">
                                <path d="M796.500 413.500h99v17h-99zM796.500 457.500h99v18h-99zM796.500 502.500h99v17h-99zM796.500 552.500h99v20h-99zM796.500 599.500h99v17h-99zM796.500 645.500h99v20h-99z"/>
                                <path d="M1019.500 427.500h51v14h-51zM1019.500 450.500h51v14h-51zM1019.500 476.500h51v14h-51zM1019.500 498.500h51v14h-51zM1019.500 520.500h51v14h-51z"/>
                            </g>
                            <g font-family="Liberation Mono" font-size="16" fill="#4a3ae0" text-anchor="end">
                                <text x="894" y="427">0.00</text><text x="894" y="472">0.00</text><text x="894" y="516">0.00</text><text x="894" y="568">0.00</text><text x="894" y="613">0.00</text><text x="894" y="661">0.00</text>
                            </g>
                            <g font-family="Liberation Serif" font-size="15">
                                <text x="883" y="409" text-anchor="end">Income</text><text x="891" y="454" text-anchor="end">Total Income</text><text x="870" y="498" text-anchor="end">Cost</text>
                                <text x="891" y="548" text-anchor="end" font-size="17">Total Cost</text><text x="796" y="641" font-size="18">Net Profit</text>
                            </g>
                            <g font-family="Noto Sans" font-size="21"><text x="781" y="614">$</text><text x="781" y="658">$</text></g>
                            <!-- counters -->
                            <text x="1014" y="414" font-family="Noto Sans" font-size="19">Counts</text>
                            <g font-family="Roboto" font-size="8" text-anchor="end">
                                <text x="1016" y="435">Rework Count</text><text x="1014" y="458">Trash Count</text><text x="1015" y="484">602A Boards</text><text x="1016" y="506">917AT Boards</text><text x="1018" y="530" font-family="Open Sans" font-size="9">Total Finished</text>
                            </g>
                            <g font-family="Liberation Sans" font-size="10" fill="#00f"><text x="1060" y="439">0</text><text x="1060" y="461">0</text><text x="1061" y="487">0</text><text x="1061" y="510">0</text><text x="1061" y="532">0</text></g>
                        </g></svg>
                    </div>
                    <div class="w-4 shrink-0 flex flex-col">
                        <button class="h-[17px] flex items-center justify-center" aria-label="Scroll model up"><svg class="w-2 h-[5px] rotate-180"><use href="#arr"/></svg></button>
                        <div class="flex-[293]"></div>
                        <div class="h-[17px] bg-[#cdcdcd]"></div>
                        <div class="flex-[239]"></div>
                        <button class="h-[17px] flex items-center justify-center" aria-label="Scroll model down"><svg class="w-2 h-[5px]"><use href="#arr"/></svg></button>
                    </div>
                </div>
                <div class="h-4 shrink-0 flex pr-4">
                    <button class="w-[17px] flex items-center justify-center" aria-label="Scroll model left"><svg class="w-2 h-[5px] rotate-90"><use href="#arr"/></svg></button>
                    <div class="flex-[642]"></div>
                    <div class="w-[17px] bg-[#cdcdcd]"></div>
                    <div class="flex-[380]"></div>
                    <button class="w-[17px] flex items-center justify-center" aria-label="Scroll model right"><svg class="w-2 h-[5px] -rotate-90"><use href="#arr"/></svg></button>
                </div>
            </section>

            <!-- module spreadsheet -->
            <section class="h-[29px] shrink-0 flex border-t-2 border-l border-[#696969] bg-white overflow-hidden">
                <div class="grow min-w-0 overflow-hidden">
                    <table class="table-fixed w-[1051px] border-collapse font-['Liberation_Sans',sans-serif] text-[11px] leading-[14px] whitespace-nowrap [&_th]:font-normal [&_th]:text-left [&_th]:pl-[3px] [&_th]:h-[19px] [&_th]:bg-[#f0f0f0] [&_th]:border-r [&_th]:border-b [&_th]:border-black [&_td]:p-0 [&_td]:pl-[3px] [&_td]:align-top [&_td]:bg-black [&_td]:text-white [&_td]:border-r [&_td]:border-dotted [&_td]:border-[#999]">
                        <colgroup><col class="w-[41px]"><col class="w-[103px]"><col class="w-[72px]"><col class="w-[124px]"><col class="w-[71px]"><col class="w-[61px]"><col class="w-[79px]"><col class="w-[68px]"><col class="w-[111px]"><col class="w-[36px]"><col class="w-[46px]"><col class="w-[151px]"><col class="w-[88px]"></colgroup>
                        <thead><tr><th></th><th>Name</th><th>Type</th><th>Action</th><th>Priority</th><th>Resources</th><th>Delay Type</th><th>Units</th><th>Allocation</th><th>Value</th><th>Std Dev</th><th>Expression</th><th>Report Statistics</th></tr></thead>
                        <tbody><tr><td>5</td><td><div class="bg-white text-black leading-[12px] mr-[2px] border-t-2 border-black">Burn In</div></td><td>Standard</td><td>Seize Delay Release</td><td>Medium(2)</td><td><button class="block w-[56px] bg-[#222] border border-[#555] leading-[12px]">1 rows</button></td><td>Expression</td><td>Hours</td><td>Value Added</td><td class="bg-[#404040]! text-[#888]!">1.5</td><td class="bg-[#404040]! text-[#888]!">.2</td><td>Burn In Time</td><td><input type="checkbox" checked aria-label="Report Statistics for Burn In" class="appearance-none block w-[7px] h-[7px] ml-1 border border-white checked:bg-[#777]"></td></tr></tbody>
                    </table>
                </div>
                <div class="w-4 shrink-0 bg-[#f0f0f0] flex flex-col">
                    <button class="h-[14px] flex items-center justify-center" aria-label="Scroll rows up"><svg class="w-2 h-[5px] rotate-180"><use href="#arr"/></svg></button>
                    <button class="h-[14px] flex items-center justify-center" aria-label="Scroll rows down"><svg class="w-2 h-[5px]"><use href="#arr"/></svg></button>
                </div>
            </section>
        </div>
    </main>

    <!-- status bar -->
    <footer class="h-[18px] shrink-0 flex items-center bg-[#f0f0f0] border-t border-[#d0d0d0] pl-[2px] text-[11px]">
        <p class="grow">Process module from Basic Process panel selected.</p>
        <div class="h-full w-[88px] border-x border-[#d4d4d4]"></div>
        <svg class="w-5 h-4"><path d="M11 13h2M14 13h2M14 10h2M17 13h2M17 10h2M17 7h2" stroke="#b0b0b0" stroke-width="2"/></svg>
    </footer>

    <!-- taskbar -->
    <div class="h-10 shrink-0 flex bg-[#1b2021] text-white [&_button]:flex [&_button]:items-center [&_button]:justify-center">
        <button class="w-12" aria-label="Start"><svg class="size-4" viewBox="0 0 16 16"><path d="M0 2.300L6.500 1.400v6.200H0zM7.300 1.300L16 0v7.600H7.300zM0 8.400h6.500v6.200L0 13.700zM7.300 8.400H16V16l-8.700-1.300z" fill="#fff"/></svg></button>
        <label class="w-[344px] flex items-center bg-[#f1f1f1] border border-[#c4c4c4] pl-[11px] gap-3 text-[#3a3a3a]">
            <svg class="size-4 shrink-0" viewBox="0 0 16 16"><circle cx="10" cy="6" r="5" fill="none" stroke="#222" stroke-width="1.200"/><path d="M6.500 9.500L.5 15.500" stroke="#222" stroke-width="1.200"/></svg>
            <input type="text" placeholder="Type here to search" aria-label="Search" class="grow min-w-0 bg-transparent text-[14px] placeholder:text-[#3a3a3a] outline-none">
        </label>
        <button class="w-12" aria-label="Cortana"><svg class="size-4" viewBox="0 0 16 16"><circle cx="8" cy="8" r="6.500" fill="none" stroke="#fff" stroke-width="2"/></svg></button>
        <button class="w-12" aria-label="Task View"><svg class="size-4" viewBox="0 0 16 16"><path d="M1.500 .5v2h9v-2M1.500 15.500v-2h9v2M.5 4.500h10v7H.5zM13.500 0v3M13.500 10v6" fill="none" stroke="#fff"/><path d="M12 5h3v3h-3z" fill="#fff"/></svg></button>
        <div class="flex ml-[2px] [&>button]:w-[39px] [&>button]:mx-[5px] [&>button]:border-y-2 [&>button]:border-transparent">
            <button class="border-b-[#9adcf8]!" aria-label="Chrome"><svg class="size-[22px]" viewBox="0 0 22 22"><circle cx="11" cy="11" r="11" fill="#fbc92d"/><path d="M1.500 5.500A11 11 0 0 0 11 22l4.500-8.500L11 11z" fill="#1b9e58"/><path d="M1.500 5.500A11 11 0 0 1 20.500 5.500L11 6.500 6 13z" fill="#e0483e"/><circle cx="11" cy="11" r="5" fill="#fff"/><circle cx="11" cy="11" r="4" fill="#4285f4"/></svg></button>
            <button class="border-b-[#9adcf8]!" aria-label="File Explorer"><svg class="size-[22px]" viewBox="0 0 22 22"><path d="M0 2h9l2 2h11v15H0z" fill="#d9a21b"/><path d="M0 5h22v14H0z" fill="#fcd35c"/><path d="M4 20v-8h14v8h-4v-4H8v4z" fill="#3f9ee0"/></svg></button>
            <button aria-label="Word"><svg class="size-[22px]"><use href="#word"/></svg></button>
            <button aria-label="Excel"><svg class="size-[22px]" viewBox="0 0 22 22"><path d="M11 3h10v16H11z" fill="#fff" stroke="#1e7145"/><path d="M13 6h7M13 9h7M13 12h7M13 15h7M17 4v14" stroke="#1e7145"/><path d="M0 3L13 0v22L0 19z" fill="#1e7145"/><text x="3" y="15" font-family="Liberation Sans" font-size="12" font-weight="bold" fill="#fff">X</text></svg></button>
            <button aria-label="PowerPoint"><svg class="size-[22px]" viewBox="0 0 22 22"><path d="M11 3h10v16H11z" fill="#fff" stroke="#d24625"/><path d="M13 13h7M13 16h7" stroke="#d24625"/><path d="M16 5a3 3 0 1 0 3 3h-3z" fill="#d24625"/><path d="M0 3L13 0v22L0 19z" fill="#d24625"/><text x="3" y="15" font-family="Liberation Sans" font-size="12" font-weight="bold" fill="#fff">P</text></svg></button>
            <button aria-label="Visio"><svg class="size-[22px]" viewBox="0 0 22 22"><path d="M11 3h10v16H11z" fill="#fff" stroke="#3955a3"/><path d="M14 6h5l-2 4v3M14 15l3-2 2 2-2 2z" fill="none" stroke="#3955a3"/><path d="M0 3L13 0v22L0 19z" fill="#3955a3"/><text x="3" y="15" font-family="Liberation Sans" font-size="12" font-weight="bold" fill="#fff">V</text></svg></button>
            <button aria-label="MaxStat"><svg class="size-[24px]" viewBox="0 0 24 24"><path d="M1 0h22v18H1z" fill="#fff"/><g font-family="Liberation Sans" font-size="9" font-weight="bold"><text x="1" y="8">MAX</text><text x="1" y="17">ST</text></g><path d="M13 13h9v9h-9z" fill="#fff" stroke="#00f" stroke-width="2"/><path d="M15 15h5v5z" fill="#00f"/></svg></button>
            <button aria-label="Minitab"><svg class="size-[23px]" viewBox="0 0 23 23"><path d="M0 0h23v23H0z" fill="#76b82a"/><path d="M3 14h4v6H3zM9 9h4v11H9zM15 4h4v16h-4z" fill="#fff"/></svg></button>
            <button class="bg-[#4a4f50] w-[49px]! mx-0! border-t-[#4a4f50]! border-b-[#9adcf8]!" aria-label="Arena"><svg class="w-6 h-5"><use href="#arena"/></svg></button>
            <button class="border-b-[#9adcf8]!" aria-label="Word document"><svg class="size-[22px]"><use href="#word"/></svg></button>
        </div>
        <div class="grow"></div>
        <div class="flex items-center [&>button]:w-6">
            <button aria-label="Hidden icons"><svg class="w-3 h-[7px] rotate-180"><use href="#chev"/></svg></button>
            <button aria-label="OneDrive"><svg class="w-4 h-[11px]" viewBox="0 0 16 11"><path d="M4 11a4 4 0 0 1 0-7q2-4 6-3 2 1 3 3 3 0 3 4 0 3-3 3z" fill="#1484d6"/><path d="M3 4q4-1 8 2l4 3q-1 2-3 2H4q-4-1-4-4z" fill="#28a8ea"/></svg></button>
            <button aria-label="Dropbox"><svg class="w-4 h-[14px]" viewBox="0 0 16 14"><path d="M4 0l4 2.500L4 5 0 2.500zM12 0l4 2.500L12 5 8 2.500zM4 5l4 2.500L4 10 0 7.500zM12 5l4 2.500-4 2.500-4-2.500zM8 8.800l4 2.500L8 14l-4-2.700z" fill="#fff"/></svg></button>
            <button aria-label="Volume muted"><svg class="w-4 h-3" viewBox="0 0 16 12"><path d="M1 4h2l4-3v10L3 8H1zM10 4l4 4M14 4l-4 4" fill="none" stroke="#fff"/></svg></button>
            <button aria-label="Network" class="ml-[2px]"><svg class="size-[13px]" viewBox="0 0 13 13"><path d="M1 12A11 11 0 0 1 12 1M4 12a8 8 0 0 1 8-8M7 12a5 5 0 0 1 5-5" fill="none" stroke="#ddd" stroke-width="1.200"/><circle cx="11" cy="11" r="1.500" fill="#fff"/></svg></button>
        </div>
        <div class="w-[60px] flex flex-col justify-center items-center leading-[18px]"><span>6:16 AM</span><span>4/9/2020</span></div>
        <button class="w-[46px]" aria-label="Notifications"><svg class="w-[17px] h-[17px]" viewBox="0 0 17 17"><path d="M1 1h15v12h-4v3l-3-3H1z" fill="none" stroke="#fff" stroke-width="1.200"/></svg></button>
        <div class="w-[7px] border-l border-[#555] ml-[3px]"></div>
    </div>

    <!-- process dialog -->
    <div role="dialog" aria-labelledby="procTitle" class="absolute left-[417px] top-[157px] w-[446px] border border-[#aaa] bg-[#f0f0f0] shadow-[0_3px_10px_rgba(0,0,0,0.3)] font-['Liberation_Sans',sans-serif] text-[11px] leading-[14px]">
        <div class="h-[30px] bg-white flex items-center pl-2 text-[#999] font-['Open_Sans',sans-serif] text-[12px]">
            <h2 id="procTitle" class="grow">Process</h2>
            <button class="w-[45px] text-[13px]" aria-label="What's this">?</button>
            <button class="w-[45px] flex justify-center" aria-label="Close Process"><svg class="w-[11px] h-[11px]"><use href="#x"/></svg></button>
        </div>
        <div class="pt-2 px-[12px] grid grid-cols-[276px_135px] gap-x-[6px]">
            <label for="pName" class="pb-[6px]">Name:</label>
            <label for="pType">Type:</label>
            <div class="relative"><select id="pName" class="appearance-none block w-full h-[21px] bg-white border border-[#7a7a7a] pl-[2px]"><option>Burn In</option></select><svg class="absolute right-1 top-2 w-[10px] h-[6px] pointer-events-none text-[#555]"><use href="#chev"/></svg></div>
            <div class="relative"><select id="pType" class="appearance-none block w-full h-[21px] bg-[#e1e1e1] border border-[#adadad] pl-[3px]"><option>Standard</option></select><svg class="absolute right-1 top-2 w-[10px] h-[6px] pointer-events-none text-[#555]"><use href="#chev"/></svg></div>
        </div>
        <fieldset class="mt-[14px] mx-[3px] mr-[7px] border border-[#dcdcdc] px-2 pb-[4px]">
            <legend class="px-[2px] -ml-[2px]">Logic</legend>
            <div class="mt-[6px] mr-[-1px] grid grid-cols-[200px_1fr] gap-x-2">
                <label for="pAction" class="pb-[5px]">Action:</label>
                <label for="pPrio">Priority:</label>
                <select id="pAction" class="appearance-none h-[21px] bg-[#e1e1e1] border border-[#adadad] pl-[3px]"><option>Seize Delay Release</option></select>
                <div class="relative"><select id="pPrio" class="appearance-none block w-full h-[21px] bg-white border border-[#7a7a7a] pl-[2px]"><option>Medium(2)</option></select><svg class="absolute right-1 top-2 w-[10px] h-[6px] pointer-events-none text-[#555]"><use href="#chev"/></svg></div>
            </div>
            <p class="mt-[5px] mb-[6px]">Resources:</p>
            <ul role="listbox" aria-label="Resources" class="w-[300px] h-[78px] bg-white border border-[#828790] p-px leading-[13px] [&>li]:pl-[2px]">
                <li role="option" aria-selected="true" class="bg-[#0078d7] text-white">Resource, Resource 1, 1</li>
                <li role="option">Resource, Resource 2, 1</li>
                <li role="option">&lt;End of list&gt;</li>
            </ul>
            <hr class="mt-[13px] mx-[-8px] h-[3px] border-y border-black">
            <div class="mt-[7px] mr-[-1px] grid grid-cols-[130px_130px_1fr] gap-x-2">
                <label for="pDelay" class="pb-[5px]">Delay Type:</label>
                <label for="pUnits">Units:</label>
                <label for="pAlloc">Allocation:</label>
                <select id="pDelay" class="appearance-none h-[21px] bg-[#e1e1e1] border border-[#adadad] pl-[3px]"><option>Expression</option></select>
                <select id="pUnits" class="appearance-none h-[21px] bg-[#e1e1e1] border border-[#adadad] pl-[3px]"><option>Hours</option></select>
                <div class="relative"><select id="pAlloc" class="appearance-none block w-full h-[21px] bg-[#e1e1e1] border border-[#adadad] pl-[3px]"><option>Value Added</option></select><svg class="absolute right-1 top-2 w-[10px] h-[6px] pointer-events-none text-[#555]"><use href="#chev"/></svg></div>
            </div>
            <label for="pExpr" class="block mt-[5px] mb-[6px]">Expression:</label>
            <div class="relative mr-[-1px]"><select id="pExpr" class="appearance-none block w-full h-[21px] bg-white border border-[#7a7a7a] pl-[2px]"><option>Burn In Time</option></select><svg class="absolute right-1 top-2 w-[10px] h-[6px] pointer-events-none text-[#555]"><use href="#chev"/></svg></div>
        </fieldset>
        <label class="mt-[7px] ml-[12px] flex items-center gap-[3px]">
            <span class="relative"><input type="checkbox" checked class="appearance-none block size-[13px] bg-white border border-[#333]"><svg class="absolute left-[2px] top-[3px] w-[10px] h-[8px] pointer-events-none"><path d="M1 3.500l3 3L9 1" fill="none" stroke="#333" stroke-width="1.300"/></svg></span>
            Report Statistics
        </label>
        <div class="mt-[15px] mb-[11px] pr-[10px] flex justify-end gap-2">
            <button class="w-[73px] h-[21px] bg-[#e1e1e1] border border-[#adadad]">OK</button>
            <button class="w-[73px] h-[21px] bg-[#e1e1e1] border border-[#adadad]">Cancel</button>
            <button class="w-[73px] h-[21px] bg-[#e1e1e1] border border-[#adadad]">Help</button>
        </div>
    </div>

    <!-- resources dialog -->
    <div role="dialog" aria-labelledby="resTitle" class="absolute left-[461px] top-[269px] w-[359px] border border-[#555] bg-[#f0f0f0] shadow-[0_4px_18px_rgba(0,0,0,0.4)] font-['Liberation_Sans',sans-serif] text-[11px] leading-[14px]">
        <div class="h-[30px] bg-white flex items-center pl-2 font-['Open_Sans',sans-serif] text-[12px]">
            <h2 id="resTitle" class="grow">Resources</h2>
            <button class="w-[45px] text-[13px]" aria-label="What's this">?</button>
            <button class="w-[45px] flex justify-center" aria-label="Close Resources"><svg class="w-[11px] h-[11px]"><use href="#x"/></svg></button>
        </div>
        <div class="pt-2 px-[12px] grid grid-cols-[165px_165px] gap-x-[6px]">
            <label for="rType" class="pb-[6px]">Type:</label>
            <div class="relative col-start-1"><select id="rType" class="appearance-none block w-full h-[21px] bg-[#e1e1e1] border border-[#adadad] pl-[3px]"><option>Resource</option></select><svg class="absolute right-1 top-2 w-[10px] h-[6px] pointer-events-none text-[#555]"><use href="#chev"/></svg></div>
            <label for="rName" class="col-start-1 pt-[5px] pb-[5px]">Resource Name:</label>
            <label for="rUnits" class="pt-[5px]">Units to Seize/Release:</label>
            <div class="relative"><select id="rName" class="appearance-none block w-full h-[21px] bg-white border border-[#7a7a7a] pl-[2px]"><option>Resource 1</option></select><svg class="absolute right-1 top-2 w-[10px] h-[6px] pointer-events-none text-[#555]"><use href="#chev"/></svg></div>
            <input id="rUnits" type="text" value="1" class="h-5 min-w-0 bg-white border border-[#7a7a7a] pl-[3px]">
        </div>
        <div class="mt-[58px] mb-[11px] pr-[10px] flex justify-end gap-2">
            <button class="w-[73px] h-[21px] bg-[#e1e1e1] border-2 border-[#0078d7]">OK</button>
            <button class="w-[73px] h-[21px] bg-[#e1e1e1] border border-[#adadad]">Cancel</button>
            <button class="w-[73px] h-[21px] bg-[#e1e1e1] border border-[#adadad]">Help</button>
        </div>
    </div>
</body>
</html>
